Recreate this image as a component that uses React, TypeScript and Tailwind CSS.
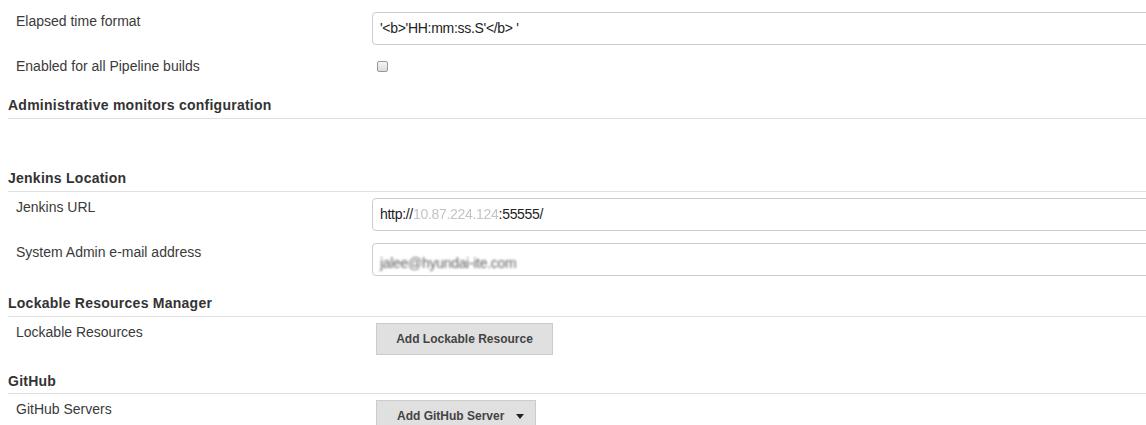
import type { ReactNode } from 'react';

const font = { fontFamily: '"Liberation Sans", Arial, sans-serif' };

function Header({ title, className }: { title: string; className: string }) {
  return (
    <div className={`ml-2 border-b border-[#e0e0e0] pt-[1px] text-[14px] font-bold leading-4 tracking-[0.25px] text-[#333] ${className}`}>
      {title}
    </div>
  );
}

function Row({ label, labelPad, className, children }: { label: string; labelPad: string; className: string; children: ReactNode }) {
  return (
    <div className={`flex items-start ${className}`}>
      <div className={`w-[372px] shrink-0 pl-4 text-[14px] leading-4 text-[#3a3a3a] ${labelPad}`}>{label}</div>
      {children}
    </div>
  );
}

function TextBox({ children }: { children: ReactNode }) {
  return (
    <div className="flex h-[33px] w-[820px] shrink-0 items-center rounded-[4px] border border-[#ccc] bg-white pl-[7px] text-[14px] tracking-[-0.3px] text-[#222]">
      {children}
    </div>
  );
}

function Caret() {
  return (
    <svg width="8" height="5" viewBox="0 0 8 5" className="ml-auto">
      <path d="M0 0h8L4 5z" fill="#222" />
    </svg>
  );
}

export default function App() {
  return (
    <div className="h-[425px] w-full overflow-hidden bg-white" style={font}>
      <div className="w-[1200px] pt-[12px]">
        <Row label="Elapsed time format" labelPad="pt-[1px]" className="">
          <TextBox>'&lt;b&gt;'HH:mm:ss.S'&lt;/b&gt; '</TextBox>
        </Row>
        <Row label="Enabled for all Pipeline builds" labelPad="pt-0" className="mt-[13px]">
          <div className="ml-[5px] mt-[3px] h-[11px] w-[11px] rounded-[2px] border border-[#999] bg-gradient-to-b from-[#f4f4f4] to-[#dcdcdc]" />
        </Row>

        <Header title="Administrative monitors configuration" className="mt-[22px] pb-[5px]" />
        <Header title="Jenkins Location" className="mt-[50px] pb-[5px]" />

        <Row label="Jenkins URL" labelPad="pt-[1px]" className="mt-[6px]">
          <TextBox>
            http://<span className="text-[#c4c4c4] blur-[0.7px]">10.87.224.124</span>:55555/
          </TextBox>
        </Row>
        <Row label="System Admin e-mail address" labelPad="pt-[1px]" className="mt-[12px]">
          <TextBox>
            <span className="pt-[8px] text-[#666] blur-[0.8px]">jalee@hyundai-ite.com</span>
          </TextBox>
        </Row>

        <Header title="Lockable Resources Manager" className="mt-[18px] pb-[5px]" />
        <Row label="Lockable Resources" labelPad="pt-[1px]" className="mt-[6px]">
          <button type="button" className="ml-[4px] h-[32px] w-[177px] border border-[#ccc] bg-[#e0e0e0] text-[12px] font-bold text-[#444]">
            Add Lockable Resource
          </button>
        </Row>

        <Header title="GitHub" className="mt-[17px] pb-[4px]" />
        <Row label="GitHub Servers" labelPad="pt-[1px]" className="mt-[6px]">
          <button type="button" className="ml-[4px] flex h-[32px] w-[160px] items-center border border-[#ccc] bg-[#e0e0e0] pl-[20px] pr-[11px] text-[12px] font-bold text-[#444]">
            Add GitHub Server
            <Caret />
          </button>
        </Row>
      </div>
    </div>
  );
}
